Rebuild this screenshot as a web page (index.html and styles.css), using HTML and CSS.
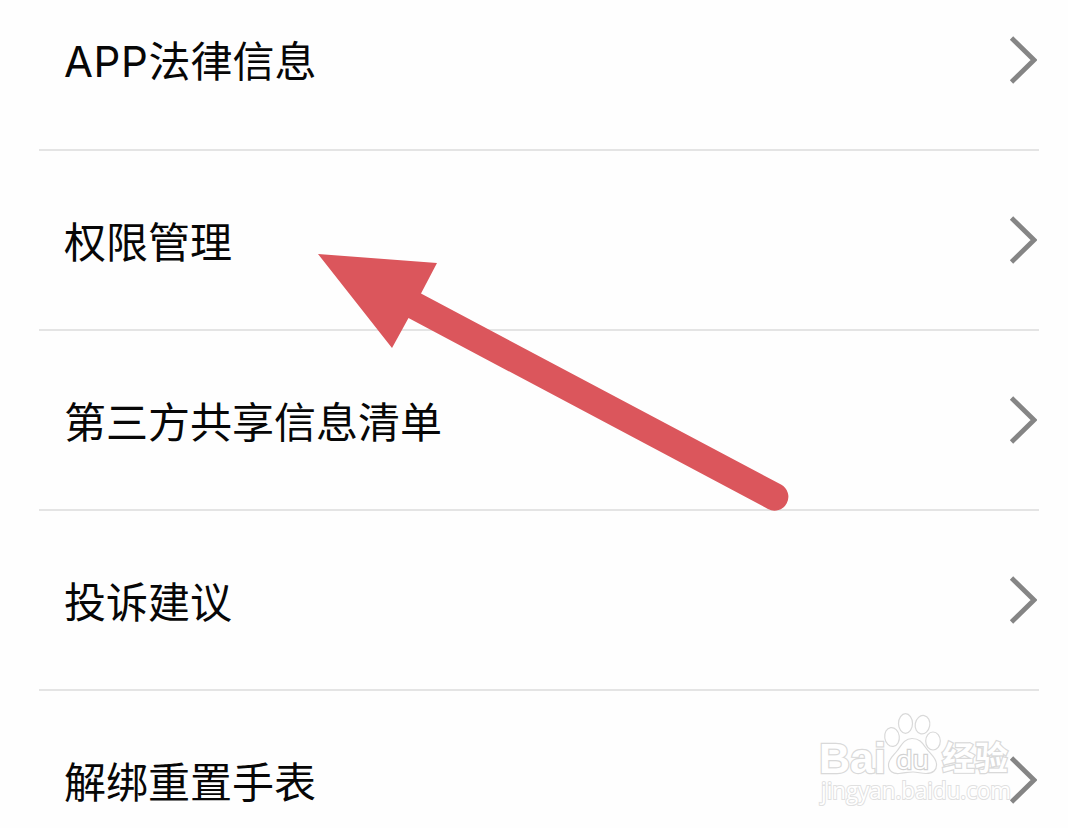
FILE: index.html
```html
<!DOCTYPE html>
<html lang="zh-CN">
<head>
    <meta charset="UTF-8">
    <meta name="viewport" content="width=device-width, initial-scale=1.0">
    <title>设置</title>
    <link rel="stylesheet" href="styles.css">
</head>
<body>
    <div class="page">
        <ul class="menu-list">
            <li class="menu-item">
                <span class="menu-label"><span class="latin">APP</span>法律信息</span>
                <svg class="chevron" viewBox="0 0 28 48"><path d="M2.5 2 L25 24 L2.5 46"/></svg>
            </li>
            <li class="menu-item">
                <span class="menu-label">权限管理</span>
                <svg class="chevron" viewBox="0 0 28 48"><path d="M2.5 2 L25 24 L2.5 46"/></svg>
            </li>
            <li class="menu-item">
                <span class="menu-label">第三方共享信息清单</span>
                <svg class="chevron" viewBox="0 0 28 48"><path d="M2.5 2 L25 24 L2.5 46"/></svg>
            </li>
            <li class="menu-item">
                <span class="menu-label">投诉建议</span>
                <svg class="chevron" viewBox="0 0 28 48"><path d="M2.5 2 L25 24 L2.5 46"/></svg>
            </li>
            <li class="menu-item">
                <span class="menu-label">解绑重置手表</span>
                <svg class="chevron" viewBox="0 0 28 48"><path d="M2.5 2 L25 24 L2.5 46"/></svg>
            </li>
        </ul>

        <!-- Pointer arrow -->
        <svg class="arrow" viewBox="0 0 472 258">
            <path d="M0 0 L119 9 L103 39.500 L463 230.500 A13.800 13.800 0 0 1 450 255 L90.500 64 L74 94 Z"/>
        </svg>

        <!-- Watermark -->
        <svg class="watermark" viewBox="0 0 200 100">
            <text class="brand" x="17" y="62.500" textLength="67" lengthAdjust="spacingAndGlyphs">Bai</text>
            <ellipse cx="90" cy="27" rx="7.300" ry="9.500" transform="rotate(-8 90 27)"/>
            <ellipse cx="103.500" cy="13.500" rx="7" ry="9.800"/>
            <ellipse cx="120.500" cy="14.700" rx="7.300" ry="9.300" transform="rotate(10 120.500 14.700)"/>
            <ellipse cx="131" cy="31" rx="7.300" ry="9"/>
            <path d="M110 28.500 C102 28.500 99 36 95 41 C91 46 86.500 49 86.500 55 C86.500 61 91 64 97 63.500 C103 63 106 62 111 62 C116 62 119 63.500 124 63.500 C131 63.500 135 60 134.500 54 C134 47 128 44 124 38 C120 32 117 28.500 110 28.500 Z"/>
            <text class="du" x="94" y="58.500" textLength="33" lengthAdjust="spacingAndGlyphs">du</text>
            <text class="jingyan" x="140" y="60" textLength="66" lengthAdjust="spacingAndGlyphs">经验</text>
            <text class="site" x="19" y="88.500" textLength="190" lengthAdjust="spacingAndGlyphs">jingyan.baidu.com</text>
        </svg>
    </div>
</body>
</html>
```

FILE: styles.css
```css
* {
    margin: 0;
    padding: 0;
    box-sizing: border-box;
}

body {
    background-color: #fefefe;
    font-family: "Noto Sans CJK SC", sans-serif;
}

.page {
    position: relative;
    height: 828px;
    overflow: hidden;
}

.menu-list {
    list-style: none;
    margin: -29px 29px 0 39px;
}

.menu-item {
    display: flex;
    justify-content: space-between;
    align-items: center;
    height: 180px;
    padding: 0 2px 0 25px;
    border-bottom: 2px solid #e4e4e4;
}

.menu-item:last-child {
    border-bottom-color: transparent;
}

.menu-label {
    font-size: 42px;
    line-height: 60px;
    color: #070707;
}

.latin {
    font-family: Inter, sans-serif;
    letter-spacing: 0.6px;
}

.chevron {
    width: 28px;
    height: 48px;
    fill: none;
    stroke: #858585;
    stroke-width: 4.8;
}

.arrow {
    position: absolute;
    left: 318px;
    top: 254px;
    width: 472px;
    height: 258px;
    fill: #db565c;
}

.watermark {
    position: absolute;
    left: 802px;
    top: 710px;
    width: 200px;
    height: 100px;
    overflow: visible;
    fill: #fff;
    stroke: #d9d9d9;
    stroke-width: 1.2;
}

.watermark text {
    paint-order: stroke;
    stroke-width: 2.4;
}

.brand {
    font: bold 42px "Liberation Sans", sans-serif;
}

.watermark .du {
    font: 26px "Open Sans", sans-serif;
    stroke: #d2d2d2;
    stroke-width: 2.4;
}

.jingyan {
    font: bold 33px "Noto Sans CJK SC", sans-serif;
}

.watermark .site {
    font: 24px "Open Sans", sans-serif;
    stroke: #e0e0e0;
    stroke-width: 2;
}
```
